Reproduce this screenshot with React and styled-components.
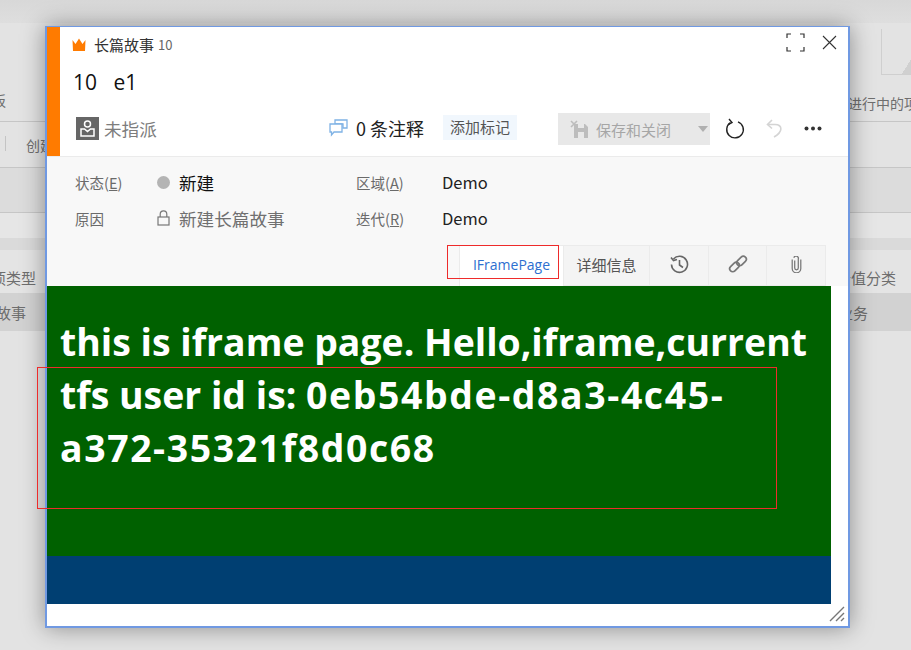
import styled, { createGlobalStyle } from "styled-components";

const GlobalStyle = createGlobalStyle`
  html, body {
    margin: 0;
    padding: 0;
    height: 650px;
    overflow: hidden;
    background: #e3e3e3;
    font-family: "Noto Sans CJK SC", "Open Sans", sans-serif;
  }
`;

const cjk = `"Open Sans", "Noto Sans CJK SC", sans-serif`;

const Page = styled.div`
  position: relative;
  width: 911px;
  height: 650px;
  overflow: hidden;
  background: #e3e3e3;
`;

/* dimmed page behind the dialog */
const Backdrop = styled.div`
  display: flex;
  flex-direction: column;
  height: 650px;
  color: #6e6e6e;
  font-size: 14px;
`;

const TopStrip = styled.div`
  height: 23px;
  background: linear-gradient(#d8d8d8, #dedede);
`;

const Band = styled.div`
  display: flex;
  align-items: ${(p) => p.$align || "center"};
  justify-content: space-between;
  box-sizing: border-box;
  height: ${(p) => p.$h}px;
  background: ${(p) => p.$bg || "transparent"};
  border-bottom: ${(p) => (p.$line ? "1px solid #c6c6c6" : "0")};
  padding: ${(p) => p.$pad || "0"};
  font-size: ${(p) => p.$size || 14}px;
  white-space: nowrap;
  overflow: hidden;
`;

const BackText = styled.span`
  margin-left: ${(p) => p.$ml || 0}px;
  margin-right: ${(p) => p.$mr || 0}px;
  margin-bottom: ${(p) => p.$mb || 0}px;
  flex: none;
`;

const ProjectTile = styled.div`
  flex: none;
  width: 63px;
  height: 99px;
  overflow: hidden;
  display: flex;
  flex-direction: column;
`;

const ChartCorner = styled.div`
  flex: none;
  width: 30px;
  height: 46px;
  margin: 7px 0 18px auto;
  box-sizing: border-box;
  border-left: 1px solid #cfcfcf;
  border-bottom: 1px solid #cfcfcf;
  background: linear-gradient(to bottom right, transparent 84%, #d0d0d0 84%);
`;

const Separator = styled.i`
  display: inline-block;
  width: 1px;
  height: 15px;
  background: #c4c4c4;
  margin: 0 20px 0 5px;
`;

const Dialog = styled.div`
  position: absolute;
  left: 45px;
  top: 26px;
  box-sizing: border-box;
  width: 805px;
  height: 602px;
  display: flex;
  flex-direction: column;
  background: #fff;
  border: 2px solid #7099e2;
  border-width: 1px 2px 2px 2px;
  box-shadow: 0 0 22px rgba(0, 0, 0, 0.38);
`;

const Header = styled.div`
  display: flex;
  height: 129px;
  flex: none;
  border-bottom: 1px solid #ebebeb;
  box-sizing: content-box;
`;

const ColorBar = styled.div`
  width: 13px;
  background: #ff7b00;
`;

const HeaderBody = styled.div`
  flex: 1;
  display: flex;
  flex-direction: column;
  padding-left: 12px;
  min-width: 0;
`;

const TypeRow = styled.div`
  display: flex;
  align-items: center;
  height: 34px;
  box-sizing: border-box;
  font-size: 15px;
  color: #333;
  gap: 6px;
`;

const TypeId = styled.span`
  color: #666;
  font-size: 13px;
  margin-left: -2px;
`;

const WindowButtons = styled.div`
  margin-left: auto;
  display: flex;
  align-items: center;
  gap: 17px;
  padding-right: 11px;
  margin-top: -3px;
`;

const Title = styled.div`
  height: 42px;
  line-height: 42px;
  font-family: ${cjk};
  font-size: 21px;
  color: #111;
  margin-left: 1px;
  white-space: pre;
`;

const ActionRow = styled.div`
  display: flex;
  align-items: center;
  height: 50px;
  box-sizing: border-box;
`;

const Assignee = styled.div`
  display: flex;
  align-items: center;
  gap: 5px;
  margin-left: 4px;
  width: 253px;
  font-size: 17.6px;
  color: #7d7d7d;
`;

const Comments = styled.div`
  display: flex;
  align-items: center;
  gap: 8px;
  width: 114px;
  font-size: 18px;
  color: #222;
`;

const AddTag = styled.div`
  width: 74px;
  height: 25px;
  line-height: 24px;
  margin-top: -2px;
  text-align: center;
  font-size: 15px;
  color: #555;
  background: #f1f7fd;
`;

const SaveButton = styled.div`
  display: flex;
  align-items: center;
  width: 152px;
  height: 32px;
  margin: 2px 0 0 41px;
  background: #e8e8e8;
  color: #a6a6a6;
  font-size: 15px;
  box-sizing: border-box;
  padding-left: 12px;
  gap: 7px;
`;

const Caret = styled.i`
  margin-left: 20px;
  width: 0;
  height: 0;
  border-left: 5px solid transparent;
  border-right: 5px solid transparent;
  border-top: 6px solid #b0b0b0;
`;

const ToolIcons = styled.div`
  display: flex;
  align-items: center;
  margin-left: 15px;
  gap: 21px;
`;

const FieldArea = styled.div`
  flex: none;
  height: 129px;
  box-sizing: border-box;
  background: #f8f8f8;
  position: relative;
`;

const FieldGrid = styled.div`
  display: grid;
  grid-template-columns: 82px 199px 86px 1fr;
  grid-auto-rows: 36px;
  padding: 7px 0 0 28px;
  align-items: center;
`;

const Label = styled.div`
  font-size: 14.5px;
  color: #6a6a6a;
  u {
    text-decoration: underline;
  }
`;

const FieldValue = styled.div`
  display: flex;
  align-items: center;
  gap: 9px;
  font-size: ${(p) => p.$size || 17.6}px;
  color: ${(p) => p.$color || "#222"};
`;

const StateDot = styled.i`
  width: 13px;
  height: 13px;
  border-radius: 50%;
  background: #b4b4b4;
`;

const Tabs = styled.div`
  position: absolute;
  left: 412px;
  bottom: 0;
  display: flex;
  height: 41px;
  box-sizing: border-box;
  border-top: 1px solid #ebebeb;
  border-right: 1px solid #ebebeb;
`;

const Tab = styled.div`
  display: flex;
  align-items: center;
  justify-content: center;
  box-sizing: border-box;
  width: ${(p) => p.$w}px;
  padding-bottom: 3px;
  font-size: ${(p) => (p.$active ? 14 : 15)}px;
  color: ${(p) => (p.$active ? "#2d6fd0" : "#555")};
  background: ${(p) => (p.$active ? "#fff" : "#f4f4f4")};
  border-left: 1px solid #ebebeb;
  border-bottom: ${(p) => (p.$active ? "0" : "1px solid #ebebeb")};
  font-family: ${cjk};
`;

const FrameArea = styled.div`
  flex: none;
  width: 784px;
  height: 318px;
  display: flex;
  flex-direction: column;
`;

const GreenPane = styled.div`
  height: 270px;
  background: #006100;
  box-sizing: border-box;
  padding: 29px 13px 0;
  color: #fff;
  font-family: "Open Sans", sans-serif;
  font-weight: 700;
  font-size: 37.4px;
  line-height: 53px;
`;

const UserId = styled.span`
  letter-spacing: 1.6px;
`;

const BluePane = styled.div`
  height: 48px;
  background: #003f72;
`;

const Grip = styled.svg`
  position: absolute;
  right: 3px;
  bottom: 4px;
`;

const RedBox = styled.div`
  position: absolute;
  left: ${(p) => p.$x}px;
  top: ${(p) => p.$y}px;
  width: ${(p) => p.$w}px;
  height: ${(p) => p.$h}px;
  box-sizing: border-box;
  border: 1px solid #ee2b2b;
`;

const CrownIcon = () => (
  <svg width="16" height="13" viewBox="0 0 16 13">
    <path d="M0.5 2 L3.5 6 L7 0.5 L10.5 6 L13.5 2 L13 13 H1 Z" fill="#ff7b00" />
  </svg>
);

const FullscreenIcon = () => (
  <svg width="19" height="19" viewBox="0 0 19 19" fill="none" stroke="#333" strokeWidth="1.2">
    <path d="M1 5 V1 H5 M14 1 H18 V5 M18 14 V18 H14 M5 18 H1 V14" />
  </svg>
);

const CloseIcon = () => (
  <svg width="15" height="15" viewBox="0 0 15 15" stroke="#333" strokeWidth="1.1">
    <path d="M1 1 L14 14 M14 1 L1 14" />
  </svg>
);

const AssigneeIcon = () => (
  <svg width="23" height="23" viewBox="0 0 23 23">
    <rect width="23" height="23" fill="#666" />
    <circle cx="11.5" cy="7" r="3" fill="none" stroke="#fff" strokeWidth="1.5" />
    <path d="M5 12 H8.5 L11.5 14.5 L14.5 12 H18 V19 H5 Z" fill="none" stroke="#fff" strokeWidth="1.5" />
  </svg>
);

const CommentIcon = () => (
  <svg width="19" height="18" viewBox="0 0 19 18" fill="#fff" stroke="#7fb2e5" strokeWidth="1.3">
    <path d="M6 1 H18 V9 H14 V5 H6 Z" />
    <path d="M1 5 H13 V13 H5 L2.5 16 V13 H1 Z" />
  </svg>
);

const SaveIcon = () => (
  <svg width="19" height="19" viewBox="0 0 19 19">
    <path d="M4 4 H15 L18 7 V18 H4 Z" fill="#bdbdbd" />
    <rect x="8" y="4" width="6" height="4" fill="#e8e8e8" />
    <rect x="8" y="12" width="6" height="6" fill="#e8e8e8" />
    <path d="M1 1 L7 7 M7 1 L1 7" stroke="#bdbdbd" strokeWidth="1.6" />
  </svg>
);

const RefreshIcon = () => (
  <svg width="20" height="21" viewBox="0 0 20 21" fill="none" stroke="#222" strokeWidth="1.4">
    <path d="M5.5 4.6 A8.3 8.3 0 1 0 13 3.8" />
    <path d="M4 1 L7 4.6 L3.2 6.6" />
  </svg>
);

const UndoIcon = () => (
  <svg width="17" height="19" viewBox="0 0 17 19" fill="none" stroke="#d4d4d4" strokeWidth="1.6">
    <path d="M6 1 L1.5 5.5 L6 9.5" />
    <path d="M2 5.5 H9 C17 5.5 17 13 8 18" />
  </svg>
);

const MoreIcon = () => (
  <svg width="18" height="5" viewBox="0 0 18 5" fill="#333">
    <circle cx="2.5" cy="2.5" r="2" />
    <circle cx="9" cy="2.5" r="2" />
    <circle cx="15.5" cy="2.5" r="2" />
  </svg>
);

const LockIcon = () => (
  <svg width="13" height="16" viewBox="0 0 13 16" fill="none" stroke="#777" strokeWidth="1.2">
    <rect x="1" y="7" width="11" height="8" />
    <path d="M3.2 7 V4.2 A3.3 3.3 0 0 1 9.8 4.2 V7" />
  </svg>
);

const HistoryIcon = () => (
  <svg width="19" height="19" viewBox="0 0 19 19" fill="none" stroke="#666" strokeWidth="1.6">
    <path d="M3.5 4 A8 8 0 1 1 1.5 9.5" />
    <path d="M1 2.5 L3.5 5.5 L7 4.5" />
    <path d="M9.5 5 V10 L13 12.5" />
  </svg>
);

const LinkIcon = () => (
  <svg width="20" height="20" viewBox="0 0 20 20" fill="none" stroke="#777" strokeWidth="1.7">
    <rect x="1" y="10" width="11" height="6" rx="3" transform="rotate(-45 6.5 13)" />
    <rect x="8" y="4" width="11" height="6" rx="3" transform="rotate(-45 13.5 7)" />
  </svg>
);

const ClipIcon = () => (
  <svg width="11" height="17" viewBox="0 0 12 19" fill="none" stroke="#777" strokeWidth="1.4">
    <path d="M4 5 V13.5 A2 2 0 0 0 8 13.5 V3.5 A2.5 2.5 0 0 0 3 2 M1.2 4 V14 A4.8 4.8 0 0 0 10.8 14 V4" />
  </svg>
);

export default function App() {
  return (
    <>
      <GlobalStyle />
      <Page>
        <Backdrop>
          <TopStrip />
          <Band $h={99} $line $align="flex-end">
            <BackText $ml={-22} $mb={11}>
              看板
            </BackText>
            <ProjectTile>
              <ChartCorner />
              <BackText>进行中的项目</BackText>
            </ProjectTile>
          </Band>
          <Band $h={46} $line>
            <span>
              <Separator />
              创建
            </span>
          </Band>
          <Band $h={45} $line $bg="#dcdcdc" />
          <Band $h={25} $bg="#e6e6e6" />
          <Band $h={12} $bg="#dadada" />
          <Band $h={43} $bg="#e4e4e4" $size={15} $pad="11px 0 0">
            <BackText $ml={-39}>工作项类型</BackText>
            <BackText $mr={15}>价值分类</BackText>
          </Band>
          <Band $h={38} $bg="#d2d2d2" $size={15}>
            <BackText $ml={-34}>长篇故事</BackText>
            <BackText $mr={43}>业务</BackText>
          </Band>
        </Backdrop>

        <Dialog>
          <Header>
            <ColorBar />
            <HeaderBody>
              <TypeRow>
                <CrownIcon />
                长篇故事
                <TypeId>10</TypeId>
                <WindowButtons>
                  <FullscreenIcon />
                  <CloseIcon />
                </WindowButtons>
              </TypeRow>
              <Title>10   e1</Title>
              <ActionRow>
                <Assignee>
                  <AssigneeIcon />
                  未指派
                </Assignee>
                <Comments>
                  <CommentIcon />0 条注释
                </Comments>
                <AddTag>添加标记</AddTag>
                <SaveButton>
                  <SaveIcon />
                  保存和关闭
                  <Caret />
                </SaveButton>
                <ToolIcons>
                  <RefreshIcon />
                  <UndoIcon />
                  <MoreIcon />
                </ToolIcons>
              </ActionRow>
            </HeaderBody>
          </Header>

          <FieldArea>
            <FieldGrid>
              <Label>
                状态(<u>E</u>)
              </Label>
              <FieldValue $color="#111">
                <StateDot />
                新建
              </FieldValue>
              <Label>
                区域(<u>A</u>)
              </Label>
              <FieldValue $size={16.5}>Demo</FieldValue>
              <Label>原因</Label>
              <FieldValue $color="#707070">
                <LockIcon />
                新建长篇故事
              </FieldValue>
              <Label>
                迭代(<u>R</u>)
              </Label>
              <FieldValue $size={16.5}>Demo</FieldValue>
            </FieldGrid>
            <Tabs>
              <Tab $active $w={104}>
                IFramePage
              </Tab>
              <Tab $w={86}>详细信息</Tab>
              <Tab $w={59}>
                <HistoryIcon />
              </Tab>
              <Tab $w={58}>
                <LinkIcon />
              </Tab>
              <Tab $w={59}>
                <ClipIcon />
              </Tab>
            </Tabs>
          </FieldArea>

          <FrameArea>
            <GreenPane>
              this is iframe page. Hello,iframe,current
              <br />
              tfs user id is: <UserId>0eb54bde-d8a3-4c45-</UserId>
              <br />
              <UserId>a372-35321f8d0c68</UserId>
            </GreenPane>
            <BluePane />
          </FrameArea>

          <Grip width="16" height="16" viewBox="0 0 16 16" stroke="#777" strokeWidth="1.4">
            <path d="M1 15 L15 1 M7 15 L15 7 M12 15 L15 12" />
          </Grip>
        </Dialog>

        <RedBox $x={447} $y={245} $w={112} $h={34} />
        <RedBox $x={37} $y={367} $w={740} $h={142} />
      </Page>
    </>
  );
}
